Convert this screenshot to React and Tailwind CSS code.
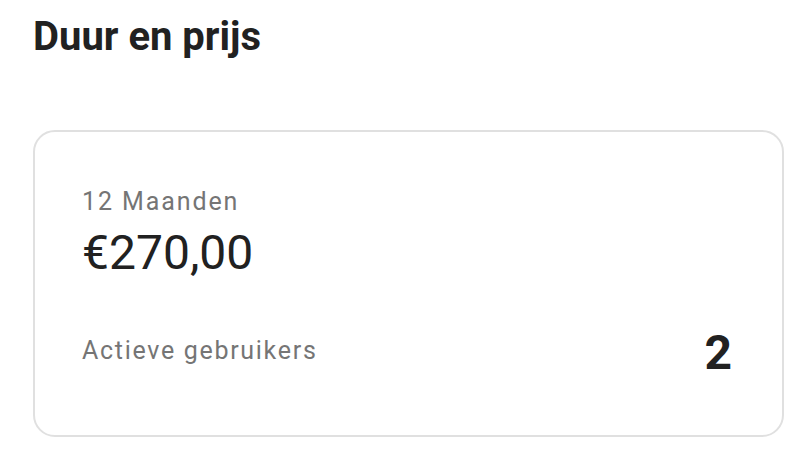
export default function App() {
  return (
    <div className="min-h-screen bg-white px-[33px] pt-[13px] font-['Roboto',sans-serif]">
      <h1 className="text-[40px] font-bold leading-[48px] text-[#212121]">Duur en prijs</h1>
      <div className="mt-[69px] w-[751px] h-[307px] rounded-[22px] border-2 border-[#e0e0e0] pl-[47px] pr-[50px] pt-[55px]">
        <div className="text-[25px] leading-[30px] tracking-[1.9px] text-[#757575]">12 Maanden</div>
        <div className="mt-[8px] text-[48px] leading-[56px] text-[#212121]">€270,00</div>
        <div className="mt-[44px] flex items-center justify-between">
          <span className="mb-[4px] text-[25px] leading-[30px] tracking-[1.7px] text-[#757575]">Actieve gebruikers</span>
          <span className="text-[48px] font-bold leading-[56px] text-[#212121]">2</span>
        </div>
      </div>
    </div>
  );
}
